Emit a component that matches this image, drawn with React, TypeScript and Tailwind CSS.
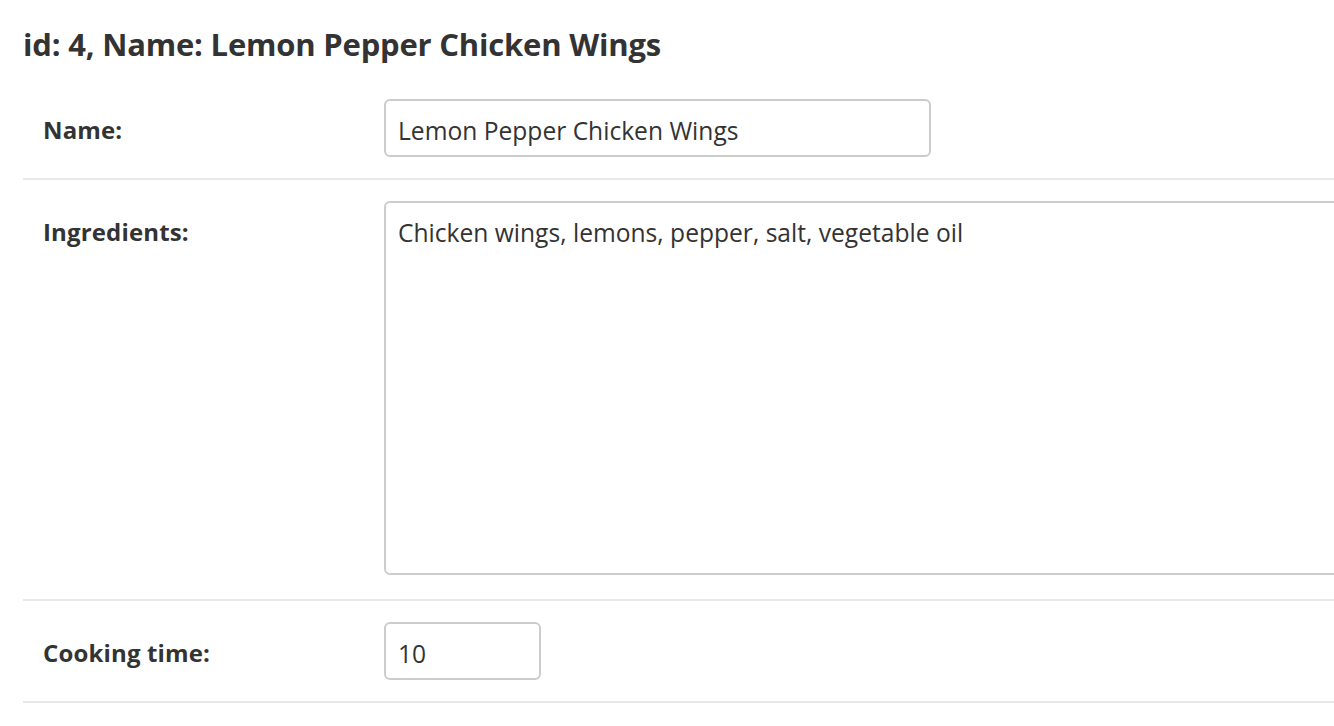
import React from 'react';

const font = { fontFamily: '"Open Sans", "Noto Sans", sans-serif' };

const fields = [
  { label: 'Name:', kind: 'input', value: 'Lemon Pepper Chicken Wings', width: 'w-[547px]' },
  { label: 'Ingredients:', kind: 'textarea', value: 'Chicken wings, lemons, pepper, salt, vegetable oil' },
  { label: 'Cooking time:', kind: 'input', value: '10', width: 'w-[157px]' },
];

export default function App() {
  return (
    <div className="w-[1334px] h-[726px] overflow-hidden bg-white text-[#333]" style={font}>
      <div className="pl-[23px] pt-[25px]">
        <h1 className="text-[31px] font-bold leading-[38px] mb-[15px] tracking-[-0.2px]">
          id: 4, Name: Lemon Pepper Chicken Wings
        </h1>
        <div>
          {fields.map((f) => (
            <div key={f.label} className="flex items-start border-b-2 border-[#e8e8e8] py-[21px] pl-[20px]">
              <label className="w-[341px] shrink-0 pt-[4px] text-[24px] font-bold leading-[54px] tracking-[0.15px]">
                {f.label}
              </label>
              {f.kind === 'input' ? (
                <input
                  readOnly
                  value={f.value}
                  className={`${f.width} h-[58px] rounded-[6px] border-2 border-[#cccccc] px-[12px] pt-[4px] text-[24.6px] text-[#333] outline-none`}
                  style={font}
                />
              ) : (
                <textarea
                  readOnly
                  value={f.value}
                  className="block w-[1000px] h-[374px] shrink-0 resize-none rounded-[6px] border-2 border-[#cccccc] px-[12px] pt-[12px] text-[24.6px] leading-[36px] text-[#333] outline-none mb-[3px]"
                  style={font}
                />
              )}
            </div>
          ))}
        </div>
      </div>
    </div>
  );
}
